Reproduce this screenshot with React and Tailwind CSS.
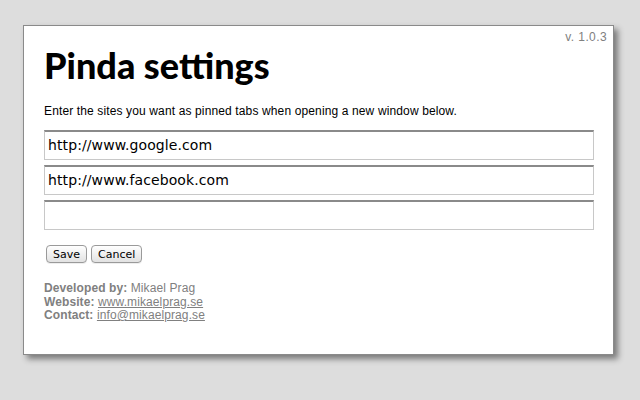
import React from 'react';

const Field = ({ value }) => (
  <div className="h-[30px] border border-[#c8c8c8] border-t-[#8a8a8a] border-t-2 bg-white px-[3px] flex items-center text-[14px] text-black font-['DejaVu_Sans',sans-serif] tracking-[0.1px]">
    {value}
  </div>
);

const Button = ({ children }) => (
  <button className="h-[18px] px-[6px] rounded-[4px] border border-[#9a9a9a] bg-gradient-to-b from-white to-[#e2e2e2] text-[11px] leading-none text-black font-['DejaVu_Sans',sans-serif] shadow-[0_1px_0_#eee]">
    {children}
  </button>
);

export default function App() {
  return (
    <div className="w-[640px] h-[400px] bg-[#dddddd] pt-[25px] pl-[23px] font-['Liberation_Sans',Arial,sans-serif]">
      <div className="w-[591px] h-[330px] bg-white border border-[#8a8a8a] shadow-[4px_4px_6px_rgba(0,0,0,0.45)] flex flex-col pl-[20px] pr-[19px]">
        <div className="flex justify-end pt-[5px] -mr-[13px] text-[12px] tracking-[0.4px] text-[#808080] leading-none">v. 1.0.3</div>
        <h1 className="mt-[4px] text-[36px] font-black leading-none text-black tracking-[0px] font-['Lato',sans-serif]">Pinda settings</h1>
        <p className="mt-[22px] text-[12px] tracking-[0.13px] leading-none text-black">
          Enter the sites you want as pinned tabs when opening a new window below.
        </p>
        <div className="mt-[13px] flex flex-col gap-[5px]">
          <Field value="http://www.google.com" />
          <Field value="http://www.facebook.com" />
          <Field value="" />
        </div>
        <div className="mt-[15px] ml-[2px] flex gap-[4px]">
          <Button>Save</Button>
          <Button>Cancel</Button>
        </div>
        <div className="mt-[19px] text-[12px] leading-[13.5px] text-[#808080] tracking-[0.1px]">
          <div><b>Developed by:</b> Mikael Prag</div>
          <div><b>Website:</b> <span className="underline">www.mikaelprag.se</span></div>
          <div><b>Contact:</b> <span className="underline">info@mikaelprag.se</span></div>
        </div>
      </div>
    </div>
  );
}
